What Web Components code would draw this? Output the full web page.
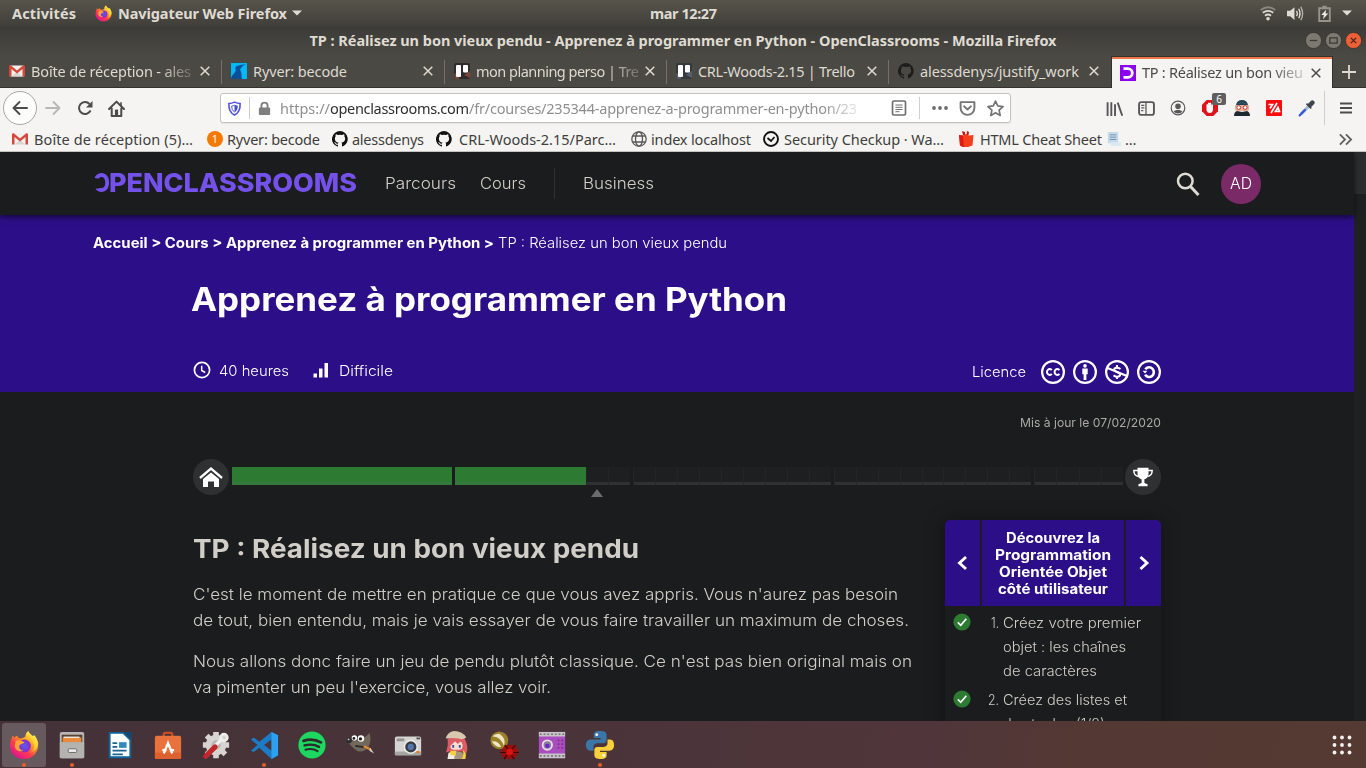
<!DOCTYPE html>
<html lang="fr">
<head>
<meta charset="utf-8">
<title>TP : Réalisez un bon vieux pendu</title>
<style>
html,body{margin:0;height:100%;overflow:hidden;background:#1b1c1d}
body{display:flex;flex-direction:column;width:1366px;height:768px;font-family:"Noto Sans","Open Sans",sans-serif}
</style>
</head>
<body>
<os-topbar></os-topbar>
<window-title></window-title>
<tab-strip></tab-strip>
<nav-toolbar></nav-toolbar>
<bookmarks-bar></bookmarks-bar>
<web-page></web-page>
<os-dock></os-dock>
<script>
const GITHUB='<path fill="currentColor" d="M8 0a8 8 0 0 0-2.5 15.6c.4 0 .5-.2.5-.4v-1.500c-2.200.5-2.700-1-2.700-1-.4-1-.9-1.200-.9-1.200-.7-.5.1-.5.1-.5.8.1 1.200.8 1.200.8.7 1.300 1.900.9 2.300.7.1-.5.3-.9.5-1.100-1.800-.2-3.600-.9-3.600-4 0-.9.300-1.600.8-2.100-.1-.2-.4-1 .1-2.100 0 0 .7-.2 2.200.8a7.500 7.500 0 0 1 4 0c1.500-1 2.200-.8 2.200-.8.4 1.100.2 1.900.1 2.100.5.6.8 1.300.8 2.100 0 3.100-1.900 3.800-3.700 4 .3.2.6.7.6 1.500v2.200c0 .2.100.5.5.4A8 8 0 0 0 8 0z"/>';
const FIREFOX='<defs><linearGradient id="a" x1=".8" y1=".1" x2=".2" y2=".9"><stop offset="0" stop-color="#fff44f"/><stop offset=".35" stop-color="#ff9a1f"/><stop offset=".65" stop-color="#ff3d4d"/><stop offset="1" stop-color="#e01490"/></linearGradient><radialGradient id="b"><stop offset="0" stop-color="#5b5bf0"/><stop offset="1" stop-color="#8a2bc8"/></radialGradient></defs><path fill="url(#a)" d="M20.500 1c1.500 3 3.500 4 5 5.500 1-.4 1-1 1-1.500 3 3 5 7 4.500 12C30.500 25 24 31 16 31S1 25 1 16.500C1 12 3 9 3.500 6c1 .5 1.500 1 2 2 1-1 2-1.500 3.500-2 0 1.500 1 2.500 3 3 2.500 0 4-1 5.500-2C17.500 4 19 2 20.500 1z"/><circle cx="16.500" cy="17" r="6.800" fill="url(#b)"/><path fill="#ffa436" d="M7 12c3-2 6-.500 9.500 1-1 2-4 1.500-5 3-2 3 1 6 4 6-5 2-9-1-9.500-5z"/><path fill="#ffdc3a" d="M20.500 1c-1 4 5 7 5.500 13 3 4-1 9-3 10 5-2 9-7 8-11-1-4-9-6-10.500-12z" opacity=".75"/>';
const GMAIL='<path fill="#f3f1ee" d="M1 2.500h14v11H1z"/><path fill="#d8d4d0" d="M3 13.500l5-5 5 5z"/><path fill="#d6483b" d="M0 3.500Q0 2 1.500 2L8 7.500 14.500 2Q16 2 16 3.500v10h-2.500V6L8 10.500 2.500 6v7.500H0z"/>';
const TRELLO='<rect width="16" height="16" rx="2" fill="#302a2b"/><path fill="#7a4638" d="M0 11l5-2v7H1zM10 12l6-4v7z"/><rect x="2" y="2" width="5" height="12" rx="1" fill="#fff"/><rect x="9" y="2" width="5" height="7.500" rx="1" fill="#fff"/>';
const ICONS={
firefox:[32,FIREFOX],
gmail:[16,GMAIL],
github:[16,GITHUB],
trello:[16,TRELLO],
trello2:[16,TRELLO.replace('#7a4638','#56606c').replace('#302a2b','#34383f')],
ryver:[16,'<rect width="16" height="16" fill="#00b8f5"/><path fill="#0b4f98" d="M15 1C9 2 3 3 4.500 6 6 9 0 12 0 16H11c-1-4 0-6-1.500-8C8.500 6 11 3 15 1z"/>'],
oc:[16,'<rect width="16" height="16" fill="#8b00ee"/><path fill="none" stroke="#fff" stroke-width="2.800" d="M3.500 3.700H8a4.300 4.300 0 0 1 0 8.600H3.500"/>'],
x:[10,'<path stroke="currentColor" stroke-width="1.500" d="M.7.7l8.600 8.600M9.300.7L.7 9.300"/>'],
plus:[14,'<path stroke="currentColor" stroke-width="1.800" d="M7 0v14M0 7h14"/>'],
caret:[10,'<path fill="currentColor" d="M0 2.500h10L5 7.500z"/>'],
wifi:[16,'<g fill="none" stroke="#dfdbd2" stroke-width="1.800"><path opacity=".4" d="M.8 5Q8-.5 15.200 5"/><path d="M2.800 7.800Q8 3.800 13.200 7.800"/><path d="M5 10.700Q8 8.300 11 10.700"/></g><circle cx="8" cy="13.700" r="1.800" fill="#dfdbd2"/>'],
volume:[16,'<path fill="#dfdbd2" d="M0 5.500h3L7 2v12l-4-3.500H0z"/><g fill="none" stroke="#dfdbd2" stroke-width="1.300"><path d="M9 5.500Q10.500 8 9 10.500M11 3.500Q13.500 8 11 12.500"/><path opacity=".7" d="M13 1.800Q16.500 8 13 14.200"/></g>'],
battery:[16,'<path fill="none" stroke="#96938b" stroke-width="1.800" d="M3 3h10v12H3zM6 1.500h4"/><path fill="#eeebe4" d="M9.500 4.500L5 9.500h2.500l-1 4L11.500 8H9z"/>'],
min:[16,'<circle cx="8" cy="8" r="7.600" fill="#7c7970" stroke="#33322e" stroke-width=".8"/><path stroke="#3b3a35" stroke-width="1.200" d="M4.500 8h7"/>'],
max:[16,'<circle cx="8" cy="8" r="7.600" fill="#7c7970" stroke="#33322e" stroke-width=".8"/><path fill="none" stroke="#3b3a35" stroke-width="1.200" d="M4.500 5.500h7v5h-7z"/>'],
close:[16,'<circle cx="8" cy="8" r="7.600" fill="#ed6037" stroke="#33322e" stroke-width=".8"/><path stroke="#44231a" stroke-width="1.200" d="M5.500 5.500l5 5M10.500 5.500l-5 5"/>'],
back:[16,'<path fill="none" stroke="currentColor" stroke-width="1.900" stroke-linecap="round" stroke-linejoin="round" d="M15 8H1.500M7.500 2L1.500 8l6 6"/>'],
forward:[16,'<path fill="none" stroke="currentColor" stroke-width="1.900" stroke-linecap="round" stroke-linejoin="round" d="M1 8h13.500M8.500 2l6 6-6 6"/>'],
reload:[16,'<path fill="none" stroke="currentColor" stroke-width="2" d="M13.500 10.500A6 6 0 1 1 12.500 4"/><path fill="currentColor" d="M15.500 1v6.500H9z"/>'],
home:[16,'<path fill="none" stroke="currentColor" stroke-width="1.900" stroke-linejoin="round" stroke-linecap="round" d="M1 8.500L8 1.500l7 7M3.500 8v7h9V8"/><path fill="currentColor" d="M6.500 9h3v6h-3z"/><path fill="currentColor" d="M11.500 2h1.500v4h-1.500z"/>'],
shield:[16,'<path fill="none" stroke="#5551e8" stroke-width="1.700" d="M8 1.200Q11 2.600 14 2.800C14.300 9 12 13 8 15 4 13 1.700 9 2 2.800Q5 2.600 8 1.200z"/><path fill="#4050cf" d="M8 4q1.800.8 3.500 1c0 3.500-1 5.800-3.500 7.200z"/><path fill="none" stroke="#4050cf" stroke-width="1" d="M8 4.500q-1.500.8-3 .9c0 3 1 5 3 6.300"/>'],
lock:[16,'<rect x="2" y="7" width="12" height="8" rx="1.200" fill="#7f7f7f"/><path fill="none" stroke="#7f7f7f" stroke-width="2" d="M4.700 8V5a3.300 3.300 0 0 1 6.600 0v3"/>'],
reader:[16,'<rect x="1.500" y="1" width="13" height="14" rx="1.500" fill="none" stroke="#6f6f6f" stroke-width="1.700"/><path stroke="#6f6f6f" d="M4.500 5h7M4.500 7.300h7M4.500 9.500h7M4.500 11.700h4"/>'],
dots:[16,'<g fill="#6f6f6f"><circle cx="2" cy="8" r="1.900"/><circle cx="8" cy="8" r="1.900"/><circle cx="14" cy="8" r="1.900"/></g>'],
pocket:[16,'<path fill="none" stroke="#757575" stroke-width="1.800" stroke-linejoin="round" d="M1.500 2h13v5.500a6.500 6.500 0 0 1-13 0z"/><path fill="none" stroke="#757575" stroke-width="1.800" stroke-linecap="round" stroke-linejoin="round" d="M4.800 6L8 9l3.200-3"/>'],
star:[16,'<path fill="none" stroke="#757575" stroke-width="1.600" stroke-linejoin="round" d="M8 1l2.100 4.600 5 .600-3.700 3.400 1 5L8 12.100l-4.400 2.500 1-5L.9 6.200l5-.600z"/>'],
library:[16,'<path stroke="#58585a" stroke-width="1.800" d="M1.500 2v13M5 2v13M8.500 4v11M11 2.500l4.300 12.300" fill="none"/>'],
sidebar:[16,'<rect x="1" y="2" width="14" height="12" rx="2" fill="none" stroke="#58585a" stroke-width="1.800"/><path stroke="#58585a" stroke-width="1.200" d="M7.500 2v12M3 5h3M3 7.500h3M3 10h2"/>'],
account:[16,'<circle cx="8" cy="8" r="6.800" fill="none" stroke="#58585a" stroke-width="1.200"/><circle cx="8" cy="6.300" r="2.800" fill="#58585a"/><path fill="#58585a" d="M3.500 11.500Q8 8 12.500 11.500 11 13.500 8 13.500t-4.500-2z"/>'],
abp:[16,'<path fill="#e0121a" d="M4.700 0h6.600L16 4.700v6.600L11.300 16H4.700L0 11.300V4.700z"/><path fill="#fff" d="M4.500 8V4.500q.8-.8 1.500 0V7V3q.8-.8 1.600 0v4V3q.8-.8 1.600 0V7.500l.3-3q.8-.7 1.500 0v5Q10.500 13 7.800 13 5.500 13 4.500 10.500z"/>'],
mask:[16,'<path fill="#23444f" d="M2 5Q3 0 8 0t6 5l1 3H1z"/><rect x="1" y="5" width="14" height="6" rx="2" fill="#e8b09a"/><circle cx="4.800" cy="7.500" r="1.900" fill="#fff" stroke="#c43b32"/><circle cx="11.200" cy="7.500" r="1.900" fill="#fff" stroke="#c43b32"/><path fill="#1d2930" d="M0 16q0-4 3-5l5 1 5-1q3 1 3 5z"/><path fill="#4a7385" d="M3 4q5-3 10 0l-5-1z"/>'],
redbox:[16,'<rect width="16" height="16" rx="1" fill="#fb0a0e"/><path fill="none" stroke="#fff" stroke-width="1.700" d="M11 3L5 13M2.500 4.500h4L4 8.500M13.500 11.500h-4L12 7.500z"/>'],
dropper:[16,'<path stroke="#3e4450" stroke-width="4.200" stroke-linecap="round" d="M11 5l2.500-2.500"/><path stroke="#3e4450" stroke-width="1.600" d="M8 3.500l4.500 4.500"/><path stroke="#a9b6cc" stroke-width="3" d="M9.500 6.500L3 13"/><path stroke="#2f55d8" stroke-width="2" stroke-linecap="round" d="M6.500 9.500L1.500 14.500"/>'],
menu:[14,'<path stroke="#4c4c4c" stroke-width="2" d="M1 2.500h12M1 7h12M1 11.500h12"/>'],
chev2:[16,'<path fill="none" stroke="#606060" stroke-width="1.900" d="M2 2.500L7.500 8 2 13.500M8.500 2.500L14 8l-5.500 5.500"/>'],
globe:[16,'<g fill="none" stroke="#5a5a56" stroke-width="1.300"><circle cx="8" cy="8" r="7.200"/><ellipse cx="8" cy="8" rx="3.500" ry="7.200"/><path d="M1.500 5h13M1.500 11h13"/></g>'],
check:[16,'<circle cx="8" cy="8" r="7" fill="none" stroke="#111" stroke-width="1.900"/><path fill="none" stroke="#111" stroke-width="1.700" d="M4.500 7l3.500 3 3.500-4"/>'],
redapp:[16,'<path fill="#f2401c" d="M1 4l4 .500L8 3l3 1.500L15.500 4l-1 10.500L10 16H5l-3-1.500z"/><path fill="#e01a12" d="M1 4l4 .5 1 11.500H5l-3-1.500z"/><path fill="#c31b12" d="M4 0l3 1v3H5zM9 0l2 1-.5 3H8.500z"/>'],
scroll:[16,'<path fill="#c5dbea" d="M2 0h11v12H2z"/><path fill="#dce9f2" d="M4 11h12v3.500Q15 16 13 15H5z"/><path stroke="#6b8fb0" d="M4 3h7M4 5.500h7M4 8h7"/>'],
search:[24,'<circle cx="9.300" cy="9" r="7.300" fill="none" stroke="#dedbd4" stroke-width="2.500"/><path stroke="#dedbd4" stroke-width="3" d="M14.500 14.500l8 8.500"/>'],
clock:[18,'<circle cx="9" cy="9" r="7.600" fill="none" stroke="#fff" stroke-width="1.700"/><path fill="none" stroke="#fff" stroke-width="1.500" d="M8.700 4.800v4.700l3.500 2"/>'],
bars:[16,'<path fill="#fff" d="M.5 11.500h3.500v4H.5zM6 6.500h3.500v9H6zM11.500 1H15v14.500h-3.500z"/>'],
cc:[24,'<circle cx="12" cy="12" r="10.900" fill="none" stroke="#fff" stroke-width="2.200"/><g fill="none" stroke="#fff" stroke-width="2"><path d="M10.800 10.200a2.700 2.900 0 1 0 0 3.600"/><path d="M18.400 10.200a2.700 2.900 0 1 0 0 3.600"/></g>'],
by:[24,'<circle cx="12" cy="12" r="10.900" fill="none" stroke="#fff" stroke-width="2.200"/><circle cx="12" cy="5.900" r="1.800" fill="#fff"/><path fill="#fff" d="M9.300 8.500h5.400v5.700h-1.300V20h-2.800v-5.800H9.300z"/>'],
nc:[24,'<circle cx="12" cy="12" r="10.900" fill="none" stroke="#fff" stroke-width="2.200"/><path fill="none" stroke="#fff" stroke-width="2" d="M15.500 9Q12 6.500 9.500 8.500q-1 2 2.500 3.500 4 1.500 3 3.500-2.500 2.500-6.500-.2M12 5v2.500M12 16.500V19"/><path stroke="#fff" stroke-width="2" d="M2.500 8l19.500 8"/>'],
sa:[24,'<circle cx="12" cy="12" r="10.900" fill="none" stroke="#fff" stroke-width="2.200"/><path fill="none" stroke="#fff" stroke-width="2.600" d="M8.300 9.300a4.700 4.900 0 1 1-.2 5.400"/><path fill="#fff" d="M5.600 10.800h4.800l-2.400 2.800z"/>'],
house:[24,'<path fill="#fff" d="M12 7.500l8 6.500v8h-5v-5.500H9V22H4v-8z"/><path fill="none" stroke="#fff" stroke-width="2.400" d="M1 13L12 3.500 23 13"/><path fill="none" stroke="#2f3031" stroke-width=".8" d="M2 14.500L12 6 22 14.500"/>'],
trophy:[24,'<path fill="#fff" d="M6 2h12v7q-1 5-4.500 5.500v4l3.500 1.500v2H7v-2l3.500-1.500v-4Q7 14 6 9z"/><path fill="none" stroke="#fff" stroke-width="1.600" d="M6.500 5H2q0 6 5.500 6.500M17.500 5H22q0 6-5.500 6.500"/>'],
prev:[16,'<path fill="none" stroke="#fff" stroke-width="2.900" d="M11 2L4.500 8l6.500 6"/>'],
next:[16,'<path fill="none" stroke="#fff" stroke-width="2.900" d="M4.500 2L11 8l-6.500 6"/>'],
done:[18,'<circle cx="9" cy="9" r="8.600" fill="#2d7a32"/><path fill="none" stroke="#fff" stroke-width="1.700" d="M4.800 9.300l3 3 5.500-6.500"/>'],
files:[32,'<rect x="3" y="2" width="26" height="28" rx="2" fill="#b9b7b4"/><rect x="5" y="5" width="22" height="8" fill="#5a4334"/><path fill="#e98b3f" d="M6 8h20v5H6z"/><path fill="#f3ece2" d="M7 7h17v1.500H7z"/><rect x="3" y="13" width="26" height="17" rx="1" fill="#b5b3b0"/><rect x="12" y="20" width="9" height="4" rx="1" fill="#e9e9e9" stroke="#6d6b69"/>'],
writer:[32,'<path fill="#0d639c" d="M4 2h16l8 8v20H4z"/><path fill="#0a4b78" d="M21 2h7v7z"/><path fill="#fff" d="M6 4h13l7 7v17H6z"/><path stroke="#1b6390" stroke-width="2" d="M8 14h5M8 18h5M8 22h15M8 26h11"/><rect x="15" y="13" width="8" height="6" fill="#2f88c0"/>'],
software:[32,'<path fill="none" stroke="#c94c27" stroke-width="2.500" d="M11.500 10V4.500q0-1.500 1.500-1.500h6q1.500 0 1.500 1.500V10"/><rect x="2" y="6" width="28" height="25" rx="2" fill="#e8713c"/><rect x="2" y="24" width="28" height="7" rx="2" fill="#dd602f"/><path fill="none" stroke="#fff" stroke-width="2.500" d="M11.500 25L16 14l4.500 11M10 21.500H14.500M18 21.500h4.500"/>'],
tools:[32,'<g fill="#d6d5d2"><circle cx="16" cy="16" r="11"/><path d="M13 2h6v28h-6zM2 13h28v6H2zM4 8l4-4 20 20-4 4zM24 4l4 4L8 28l-4-4z"/></g><circle cx="16" cy="16" r="5" fill="#b9b6b5"/><path stroke="#f3f2f0" stroke-width="3.500" d="M14 18L23 9"/><circle cx="24.500" cy="8" r="3.600" fill="none" stroke="#efeeeb" stroke-width="2.800"/><path stroke="#c1272d" stroke-width="5.500" stroke-linecap="round" d="M5 28l10-10"/>'],
vscode:[32,'<path fill="#1b7cc5" d="M24 2l7 3.500V27l-7 4L11 19 5 23.500 2 22l7-6-7-6 3-2 6 4.500z"/><path fill="#48343a" d="M24 10v12l-8-6z"/><path fill="#2ba1f1" d="M24 2l7 3.500V27l-7 4z"/>'],
spotify:[32,'<circle cx="16" cy="16" r="14.500" fill="#1ed760"/><g fill="none" stroke="#2b2a2b" stroke-linecap="round"><path stroke-width="3" d="M7 11.500q10-3 18.500 1.700"/><path stroke-width="2.500" d="M8 16.500q8.500-2.500 15.500 1.500"/><path stroke-width="2.100" d="M9 21q7-2 13 1.500"/></g>'],
gimp:[32,'<path fill="#6f685b" d="M2 11q8 2 11 0 9-2 13-8 3 8-1 15-3 5-11 5-8-5-12-12z"/><circle cx="4.500" cy="11" r="3" fill="#2b2b2b"/><circle cx="3.800" cy="10" r="1" fill="#ccc"/><circle cx="10" cy="8.500" r="2.900" fill="#fff"/><circle cx="17" cy="9" r="3.500" fill="#fff"/><circle cx="9.500" cy="9" r="1.500" fill="#222"/><circle cx="16.500" cy="9.500" r="1.800" fill="#222"/><path stroke="#2c2929" stroke-width="2" d="M11 17q8 1 13 2" fill="none"/><path stroke="#e58834" stroke-width="2.500" d="M20 17.500l7 3"/><path fill="#d8d2c4" d="M27 19l4 6-5-3z"/>'],
camera:[32,'<rect x="2" y="7" width="28" height="20" rx="2" fill="#d5d5d2"/><path fill="#a5a5a2" d="M2 23h28v4H2z"/><rect x="4" y="9" width="8" height="3" fill="#949492"/><circle cx="19" cy="18" r="7.500" fill="#efefed"/><circle cx="19" cy="18" r="6" fill="#3a3d45"/><circle cx="19" cy="18" r="3.300" fill="#5378b0"/><rect x="25" y="22.500" width="3" height="2" fill="#e87722"/><rect x="25" y="8" width="4" height="2" fill="#555"/>'],
anime:[32,'<path fill="#dd5b66" d="M7 9h18q5 8 2 16l-4-2H9l-4 1q3-6 2-15z"/><rect x="10" y="12" width="13" height="9" rx="4" fill="#f7ded0"/><path fill="#dd5b66" d="M8 8h17l-1 8-3-4-3 3-3-3-5 5z"/><path fill="#3e4b8f" d="M12 16h2v3h-2zM19 16h2v3h-2z"/><path fill="#d8c8ae" d="M5 9Q7 2 14 1q9 0 13 7-5 3-8 1-8-1-14 0z"/><path fill="#a9967e" d="M7 31l1-7 7-2 8 2 2 7z"/><path fill="#f1eee6" d="M8 25q4-3 7 0l-1 6H7z"/><path fill="#f6cf3c" d="M10 22h6v5h-6zM23 21q5 3 3 10h-4q3-5 1-10z"/>'],
coins:[32,'<circle cx="11" cy="11" r="9.500" fill="#9c8128"/><path fill="#ede7c8" d="M4 7q8 0 12 10 3-8-5-13-5 0-7 3zM3 12q4 7 10 6-3-7-10-6z"/><path fill="#96100f" d="M17 16h11l4 8-5 7H16l-4-7z"/><circle cx="22" cy="23.500" r="3.500" fill="#d9130f"/><path stroke="#3a0505" stroke-width="1.200" fill="none" d="M17 16l3 4M28 16l-3 4M12 24h6M32 24h-6M16 31l3-4M27 31l-3-4"/>'],
recorder:[32,'<rect x="2" y="2" width="28" height="28" fill="#a94ebc"/><path fill="#c8c6c9" d="M2 2h28v5H2zM2 25h28v5H2z"/><path stroke="#77717a" stroke-width="1.800" stroke-dasharray="2 2" d="M3 4.500h26M3 27.500h26"/><circle cx="11" cy="16" r="6" fill="#e3dfe5"/><circle cx="11" cy="16" r="4" fill="#8a7a9c"/><circle cx="11" cy="17" r="2.300" fill="#6c25ca"/><path stroke="#813392" stroke-width="2" stroke-dasharray="2 2" d="M22 11h6M22 15h6M22 19h6"/>'],
python:[32,'<path fill="#3a76a8" d="M16 1c-6 0-6.500 2-6.500 4v3.500h7V10H6C2 10 1 13 1 16.500S3 22 5.500 22H9v-4c0-2 1.500-4 4-4h7c2 0 3-1.500 3-3V5c0-3-3-4-7-4z"/><path fill="#fbcf3c" d="M16.500 31c6 0 6.500-2 6.500-4v-3.500h-7V22h9.500c4.500 0 5.500-3 5.500-6s-1-6-4.500-6H24v4.500c0 2-1.500 3.500-4 3.500h-7c-2 0-3 1.500-3 3v6c0 3 3 4 6.500 4z"/><circle cx="12.500" cy="5" r="1.500" fill="#fff"/><circle cx="20" cy="27" r="1.500" fill="#fff"/>'],
apps:[20,'<g fill="#f4f2f0"><circle cx="2.500" cy="2.500" r="1.900"/><circle cx="10" cy="2.500" r="1.900"/><circle cx="17.500" cy="2.500" r="1.900"/><circle cx="2.500" cy="10" r="1.900"/><circle cx="10" cy="10" r="1.900"/><circle cx="17.500" cy="10" r="1.900"/><circle cx="2.500" cy="17.500" r="1.900"/><circle cx="10" cy="17.500" r="1.900"/><circle cx="17.500" cy="17.500" r="1.900"/></g>']
};

function define(name,css,html){
  customElements.define(name,class extends HTMLElement{
    constructor(){
      super();
      const t=document.createElement('template');
      t.innerHTML='<style>*,:host{box-sizing:border-box}'+css+'</style>'+html;
      this.attachShadow({mode:'open'}).append(t.content.cloneNode(true));
    }
  });
}
const icon=(n,s,ml=0,extra='')=>`<ui-icon name="${n}" size="${s}" style="margin-left:${ml}px;${extra}"></ui-icon>`;
const fit=(t,w,ml=0,extra='')=>`<fit-text w="${w}" style="margin-left:${ml}px;${extra}">${t}</fit-text>`;

define('os-topbar',`
:host{display:flex;align-items:center;flex:none;height:27px;padding:0 14px 1px 12px;background:linear-gradient(#57544b,#403e3a);color:#dfdbd2;font-weight:700;font-size:14.500px;line-height:24px}
.l{display:flex;align-items:center;width:638px}.r{display:flex;align-items:center;margin-left:auto}`,
`<div class="l">${fit('Activités',64)}${icon('firefox',17,19)}${fit('Navigateur Web Firefox',169,6)}${icon('caret',10,5)}</div>${fit('mar 12:27',67)}
<div class="r">${icon('wifi',16)}${icon('volume',17,11)}${icon('battery',17,12)}${icon('caret',10,9)}</div>`);

define('window-title',`
:host{display:grid;grid-template-columns:1fr 747px 1fr;align-items:center;flex:none;height:29px;padding-bottom:3px;background:linear-gradient(#3c3b37,#4b4943);color:#dfdbd2;font-weight:700;font-size:14.500px;line-height:24px}
.b{display:flex;justify-content:flex-end;gap:3px;padding-right:4px;padding-top:1px}`,
`<span></span>${fit('TP : Réalisez un bon vieux pendu - Apprenez à programmer en Python - OpenClassrooms - Mozilla Firefox',747)}<div class="b">${icon('min',17)}${icon('max',17)}${icon('close',17)}</div>`);

define('browser-tab',`
:host{display:flex;align-items:center;flex:none;position:relative;height:32px;padding:0 12px 1px 9px;color:#dedad2;font-size:14.500px;border-bottom:1px solid #33322e}
:host(:not([active],[last]))::after{content:"";position:absolute;right:0;top:4px;height:24px;width:1px;background:#75726a}
:host([active]){background:#f5f4f2;color:#4b4a47;border:1px solid #33322e;border-bottom:0;box-shadow:inset 0 2px #f07746;padding:0 11px 0 8px}
:host([fade]) .t{-webkit-mask-image:linear-gradient(90deg,#000 80%,rgba(0,0,0,.25))}
.t{display:block;padding:5px 0 6px;line-height:20px}.x{margin-left:auto;display:flex}`,
`<slot name="icon"></slot><span class="t"><slot></slot></span><span class="x">${icon('x',10)}</span>`);

const tab=(w,ic,t,tw,attr='',c='')=>`<browser-tab ${attr} style="width:${w}px">${`<ui-icon slot="icon" name="${ic}" size="16" style="margin-right:6px;${c}"></ui-icon>`}${fit(t,tw)}</browser-tab>`;
define('tab-strip',`:host{display:flex;flex:none;height:32px;background:#4b4943;color:#dedad2}
.n{display:flex;flex:1;align-items:center;padding-left:9px;border-bottom:1px solid #33322e}`,
tab(222,'gmail','Boîte de réception - ales',160,'fade')+tab(223,'ryver','Ryver: becode',94)+tab(222,'trello','mon planning perso | Tre',163,'fade')+tab(222,'trello2','CRL-Woods-2.15 | Trello',157)+tab(222,'github','alessdenys/justify_work',159,'last','color:#1d1d1b')+tab(222,'oc','TP : Réalisez un bon vieu',161,'active fade')+`<div class="n">${icon('plus',14)}</div>`);

define('nav-toolbar',`
:host{display:flex;align-items:center;flex:none;height:39px;padding-top:1px;background:#f5f4f2;color:#4c4c4b}
.back{display:grid;place-items:center;width:34px;height:34px;margin-left:3px;border:1px solid #a8a7a4;border-radius:50%;background:#fdfdfc}
.url{display:flex;align-items:center;width:791px;height:30px;margin-left:95px;border:1px solid #c4c2bf;border-radius:3px;background:#fff;font-size:14.500px;line-height:20px;color:#8f8f8f;box-shadow:0 1px 1px #0001}
.s{width:1px;height:22px;background:#cfcecc}
.fade{-webkit-mask-image:linear-gradient(90deg,#000 94%,rgba(0,0,0,.2))}
.abp{position:relative;display:flex;margin-left:16px}
.badge{position:absolute;left:10px;top:-7px;width:14px;height:12px;border-radius:2px;background:#5f5f5f;color:#fff;font-size:10px;line-height:12px;text-align:center}
.big{height:34px}`,
`<span class="back">${icon('back',16)}</span>${icon('forward',16,8,'color:#b9b8b6')}${icon('reload',16,16)}${icon('home',17,15)}
<div class="url">${icon('shield',15,6)}<span class="s" style="margin-left:7px"></span>${icon('lock',15,7)}<span class="fade" style="margin-left:8px;display:flex">${fit('https://',50)}${fit('openclassrooms.com',139,0,'color:#2e2e2e')}${fit('/fr/courses/235344-apprenez-a-programmer-en-python/23',388)}</span>${icon('reader',16,34)}<span class="s" style="margin-left:12px"></span>${icon('dots',16,12)}${icon('pocket',17,11)}${icon('star',17,11)}</div>
${icon('library',17,95)}${icon('sidebar',17,15)}${icon('account',16,15)}<span class="abp">${icon('abp',16)}<span class="badge">6</span></span>${icon('mask',16,16)}${icon('redbox',16,16)}${icon('dropper',17,16)}<span class="s big" style="margin-left:9px"></span>${icon('menu',14,14)}`);

define('bookmarks-bar',`
:host{display:flex;align-items:center;flex:none;height:25px;background:#f5f4f2;border-bottom:1px solid #c5c3c0;color:#3f3f3d;font-size:14.500px;line-height:22px}
.one{display:grid;place-items:center;width:16px;height:16px;margin-left:14px;border-radius:50%;background:#f57900;color:#fff;font-size:11px;line-height:16px}`,
`${icon('gmail',16,12)}${fit('Boîte de réception (5)…',159,6)}<span class="one">1</span>${fit('Ryver: becode',93,4)}${icon('github',16,12,'color:#111')}${fit('alessdenys',72,4)}${icon('github',16,12,'color:#111')}${fit('CRL-Woods-2.15/Parc…',157,7)}${icon('globe',16,15)}${fit('index localhost',100,4)}${icon('check',16,12)}${fit('Security Checkup · Wa…',160,5)}${icon('redapp',16,14)}${fit('HTML Cheat Sheet',122,6)}${icon('scroll',15,4)}${fit('…',13,4)}${icon('chev2',15,200)}`);

define('web-page',`
:host{display:flex;flex:none;height:569px;overflow:hidden;background:#1b1c1d;font-family:Inter,"Open Sans",sans-serif;font-weight:300;color:#d1cec8;--stretch:1}
main{width:1354px;display:flex;flex-direction:column}
.bar{width:12px;background:#1f2021}.thumb{height:42px;background:#2c2d2e}
.cols{display:flex;padding-left:193px}`,
`<main><site-header></site-header><course-hero></course-hero><course-progress></course-progress><div class="cols"><lesson-body></lesson-body><chapter-nav></chapter-nav></div></main><div class="bar"><div class="thumb"></div></div>`);

define('site-header',`
:host{display:flex;align-items:center;flex:none;position:relative;height:63px;padding-left:93px;background:#1b1c1d;box-shadow:0 2px 6px #0009;font-size:16px}
fit-text{position:relative;top:-1px}
.logo{display:flex;align-items:center;width:264px;color:#7451eb;font-weight:800;font-size:26px;line-height:30px}
.o{display:block;clip-path:polygon(0 0,100% 0,100% 100%,0 100%,0 69%,45% 65%,45% 35%,0 31%)}
.sep{width:1px;height:31px;margin:0 28px;background:#303132}
.av{display:grid;place-items:center;width:40px;height:40px;margin-left:21px;border-radius:50%;background:#7b2a68;color:#fff}`,
`<div class="logo"><span class="o">${fit('O',17)}</span>${fit('PENCLASSROOMS',248,-1)}</div>${fit('Parcours',71,28)}${fit('Cours',46,24)}<span class="sep"></span>${fit('Business',71)}${icon('search',24,522)}<span class="av">${fit('AD',22)}</span>`);

define('course-hero',`
:host{display:flex;flex-direction:column;flex:none;height:177px;background:#2c0f88;color:#fff}
.crumb{display:flex;align-items:center;height:20px;margin:17px 0 0 93px;font-size:14px}
h1{margin:29px 0 0 191px;font-size:32px;font-weight:700;line-height:38px;height:38px}
.meta{display:flex;align-items:center;height:24px;margin:39px 0 0 193px;font-size:14.500px}
.cc{display:flex;gap:8px;margin-left:15px;padding-top:3px}
.lic{padding-top:2px}`,
`<div class="crumb">${fit('Accueil &gt; Cours &gt; Apprenez à programmer en Python &gt;',401,0,'font-weight:700')}${fit('TP : Réalisez un bon vieux pendu',229,4)}</div>
<h1>${fit('Apprenez à programmer en Python',596)}</h1>
<div class="meta">${icon('clock',18)}${fit('40 heures',70,8)}${icon('bars',16,24)}${fit('Difficile',54,10)}<span class="lic">${fit('Licence',54,579)}</span><span class="cc">${icon('cc',24)}${icon('by',24)}${icon('nc',24)}${icon('sa',24)}</span></div>`);

const seg=(w,n,done,ml)=>`<i class="seg" style="width:${w}px;margin-left:${ml}px">${Array.from({length:n},(_,i)=>`<b class="${i<done?'d':''}"></b>`).join('')}</i>`;
define('course-progress',`
:host{display:flex;flex-direction:column;flex:none;height:128px}
.date{display:flex;justify-content:flex-end;width:1161px;margin-top:20px;height:20px;align-items:center;font-size:12px;font-weight:400;color:#aaa9a5}
.row{display:flex;align-items:center;margin:27px 0 0 193px;height:36px}
.end{display:grid;place-items:center;width:36px;height:36px;border-radius:50%;background:#2f3031}
.seg{display:flex;height:18px;margin-bottom:2px}
b{flex:1;background:linear-gradient(90deg,#242526 1px,transparent 1px),linear-gradient(#1e1f20 15px,#303132 15px)}
b.d{background:linear-gradient(#2d7a32 15px,#37793a 15px)}
.tri{width:12px;height:8px;margin:-6px 0 0 591px;background:#6c6c6c;clip-path:polygon(50% 0,100% 100%,0 100%)}`,
`<div class="date">${fit('Mis à jour le 07/02/2020',141)}</div><div class="row"><span class="end">${icon('house',24)}</span>${seg(220,10,10,3)}${seg(175,8,6,3)}${seg(198,9,0,3)}${seg(197,9,0,3)}${seg(89,4,0,3)}<span class="end" style="margin-left:2px">${icon('trophy',22)}</span></div><div class="tri"></div>`);

define('lesson-body',`
:host{display:block;width:752px;padding-top:13px;font-size:16px;line-height:26px}
h2{margin:0 0 16px;font-size:26px;font-weight:700;line-height:32px;height:32px}
p{display:flex;flex-direction:column;margin:0 0 15px}`,
`<h2>${fit('TP : Réalisez un bon vieux pendu',446)}</h2><p>${fit("C'est le moment de mettre en pratique ce que vous avez appris. Vous n'aurez pas besoin",705)}${fit('de tout, bien entendu, mais je vais essayer de vous faire travailler un maximum de choses.',716)}</p><p>${fit("Nous allons donc faire un jeu de pendu plutôt classique. Ce n'est pas bien original mais on",719)}${fit("va pimenter un peu l'exercice, vous allez voir.",358)}</p>`);

define('chapter-nav',`
:host{display:block;width:216px;height:300px;border-radius:5px 5px 0 0;box-shadow:0 0 16px #0a0a0a80;font-size:14px;line-height:24px}
.h{display:grid;grid-template-columns:35px 1fr 35px;gap:2px;height:86px;border-radius:5px 5px 0 0;overflow:hidden}
.h>*{display:flex;flex-direction:column;align-items:center;justify-content:center;background:#2c0f88;color:#fff;font-weight:700;line-height:17px}
.i{display:grid;grid-template-columns:18px 28px 1fr;column-gap:0;padding:0 0 5px 8px}
.i>*{display:flex;flex-direction:column}.n{align-items:flex-end;width:28px}
.t{padding-left:4px}.i ui-icon{margin-top:2px!important}
.list{padding-top:5px}`,
`<div class="h"><span>${icon('prev',16)}</span><span>${fit('Découvrez la',94)}${fit('Programmation',116)}${fit('Orientée Objet',108)}${fit('côté utilisateur',110)}</span><span>${icon('next',16)}</span></div>
<div class="list"><div class="i">${icon('done',18)}<span class="n">${fit('1.',8)}</span><span class="t">${fit('Créez votre premier',138)}${fit('objet : les chaînes',123)}${fit('de caractères',94)}</span></div>
<div class="i">${icon('done',18)}<span class="n">${fit('2.',11)}</span><span class="t">${fit('Créez des listes et',124)}${fit('des tuples (1/2)',102)}</span></div></div>`);

define('os-dock',`
:host{display:flex;align-items:flex-start;flex:none;height:47px;background:linear-gradient(100deg,#443238 0,#493439 40%,#50363a 68%,#543833 80%,#553a33 100%)}
.a{position:relative;display:grid;place-items:center;width:44px;height:44px;margin:2px 2px 0;border-radius:3px}
.on{background:#675a5f}
.run::after{content:"";position:absolute;left:20px;bottom:0;width:4px;height:4px;border-radius:50%;background:#ee5a24}`,
['firefox','files','writer','software','tools','vscode','spotify','gimp','camera','anime','coins','recorder','python'].map(n=>`<span class="a${n==='firefox'?' on':''}${['firefox','files','vscode','python'].includes(n)?' run':''}">${icon(n,30)}</span>`).join('')+icon('apps',20,708,'margin-top:14px'));

customElements.define('ui-icon',class extends HTMLElement{
  connectedCallback(){
    if(this.shadowRoot)return;
    const [v,body]=ICONS[this.getAttribute('name')],s=this.getAttribute('size');
    this.attachShadow({mode:'open'}).innerHTML=`<style>:host{display:block;flex:none;width:${s}px;height:${s}px}svg{display:block}</style><svg width="${s}" height="${s}" viewBox="0 0 ${v} ${v}">${body}</svg>`;
  }
});

/* Single line of text spanning exactly w pixels: by tracking, or by widening the glyphs where --stretch is set. */
customElements.define('fit-text',class extends HTMLElement{
  connectedCallback(){
    if(this.shadowRoot)return;
    const w=+this.getAttribute('w');
    this.attachShadow({mode:'open'}).innerHTML=`<style>:host{display:block;flex:none;width:${w}px;white-space:nowrap}span{display:inline-block;transform-origin:0 50%}</style><span><slot></slot></span>`;
    const s=this.shadowRoot.querySelector('span'),n=this.textContent.length,nat=s.getBoundingClientRect().width;
    if(getComputedStyle(this).getPropertyValue('--stretch').trim()==='1')s.style.transform=`scaleX(${w/nat})`;
    else if(n>1)s.style.letterSpacing=((w-nat)/(n-1))+'px';
  }
});
</script>
</body>
</html>
